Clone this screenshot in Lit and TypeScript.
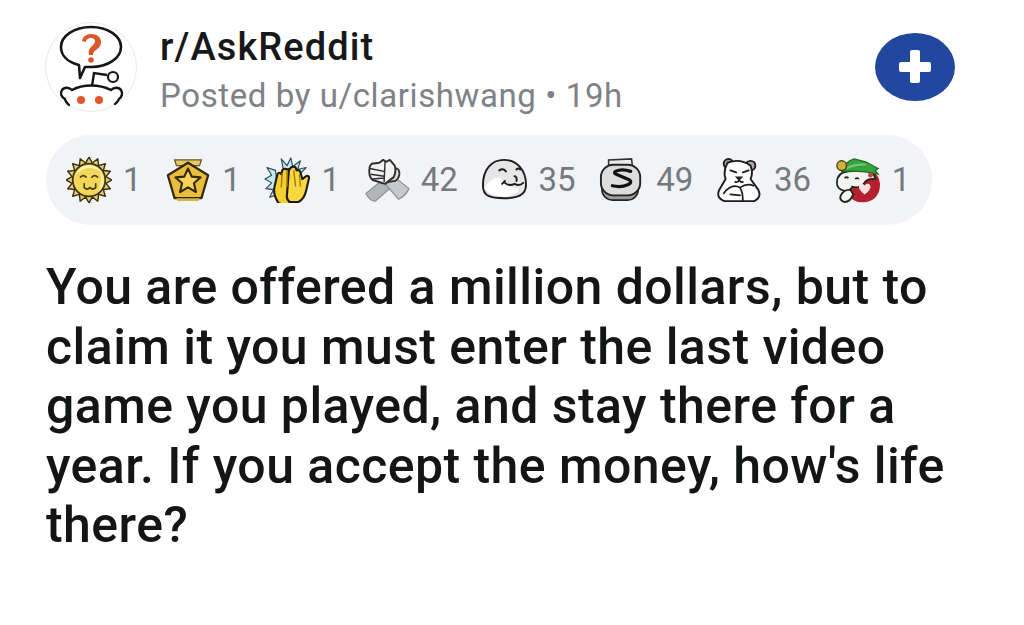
import { LitElement, html, css, svg } from "lit";
import { customElement } from "lit/decorators.js";

const sunRays = Array.from({ length: 16 }, (_, i) => {
  const a = (i * Math.PI * 2) / 16;
  const b = a + Math.PI / 16;
  const c = a - Math.PI / 16;
  const p = (r: number, t: number) => `${(24 + r * Math.cos(t)).toFixed(1)},${(24 + r * Math.sin(t)).toFixed(1)}`;
  return `${p(18, c)} ${p(24, a)} ${p(18, b)}`;
}).join(" ");

const icons: Record<string, unknown> = {
  sun: svg`<polygon points=${sunRays} fill="#e9cf6a" stroke="#3b3212" stroke-width="1.5" stroke-linejoin="round"/>
    <circle cx="24" cy="24" r="17" fill="#f2d75a" stroke="#3b3212" stroke-width="1.8"/>
    <path d="M9 21a15.500 15.500 0 0 1 29-4 18 18 0 0 0-29 4z" fill="#fff6bd"/>
    <path d="M36 14a16 16 0 0 1-3 23q5-10 3-23z" fill="#fff6bd" opacity=".7"/>
    <path d="M15 21q3-3 6 0M27 21q3-3 6 0" fill="none" stroke="#4a3d10" stroke-width="1.6" stroke-linecap="round"/>
    <path d="M19 28v4q3 3 6 0q3 3 6 0v-4" fill="none" stroke="#4a3d10" stroke-width="1.7" stroke-linecap="round"/>`,
  star: svg`<path d="M10 3h28l-2 6H12z" fill="#e7c869" stroke="#6b5520" stroke-width="1.4"/>
    <path d="M24 6l21 13-7 24H10L3 19z" fill="#e8be3c" stroke="#33290c" stroke-width="2.4" stroke-linejoin="round"/>
    <path d="M12 43h24l-1 3H13z" fill="#d6b24a"/>
    <path d="M24 12l3.900 8.500 9.100.8-6.800 6.100 2.100 9.100-8.300-4.800-8.300 4.800 2.100-9.100-6.800-6.100 9.100-.8z" fill="#f5d456" stroke="#33290c" stroke-width="2.200" stroke-linejoin="round"/>`,
  clap: svg`<path d="M12 14L3 11l5 8-7 4 7 4-6 6 8 1-4 8 9-3zM20 12l-2-10 6 7 4-8 2 9 8-6-3 9 9-2-7 7z" fill="#c7e6ef" stroke="#294a57" stroke-width="1.200" stroke-linejoin="round"/>
    <path d="M15 48q-6-10-4-17l3-13q2-3 4 0l1-4q2-3 5-1 2-1 4 1l2 18-1 14q-3 4-9 4z" fill="#f4cf2e" stroke="#1d1a0c" stroke-width="2.200" stroke-linejoin="round"/>
    <path d="M26 14l2-3q3-2 5 0l1 3q3-1 4 2l2 7 4-3q3-1 3 2l-3 13q-2 9-8 12h-9q-4-3-3-8z" fill="#f7d83e" stroke="#1d1a0c" stroke-width="2.200" stroke-linejoin="round"/>
    <path d="M19 17l-1 15M24 14l0 17M31 14l2 17M37 18l1 13" stroke="#a67d0e" stroke-width="1.500" fill="none"/>`,
  arm: svg`<path d="M2 38l16-13 10 7-16 14q-6 0-10-8z" fill="#b3b6b7" stroke="#8a8d8f" stroke-width="1.200" stroke-linejoin="round"/>
    <path d="M47 33L32 21l-9 8 13 15q7-3 11-11z" fill="#c6c8c9" stroke="#8a8d8f" stroke-width="1.200" stroke-linejoin="round"/>
    <path d="M33 25q6-5 3-12l-6-3-3 10-9 7z" fill="#d6d7d8" stroke="#2e2e2e" stroke-width="1.800" stroke-linejoin="round"/>
    <path d="M6 10q-2 10 3 14l13 4 9-7q3-7 1-12l-5-6-4 2-3-2-4 3-8 1z" fill="#f1f1f1" stroke="#2e2e2e" stroke-width="2" stroke-linejoin="round"/>
    <path d="M6 12l15 3M7 18l14 2M9 23l12-1M22 4l-1 22" stroke="#2e2e2e" stroke-width="1.500" fill="none"/>`,
  seal: svg`<path d="M2 30C2 13 11 3 24 3s23 10 23 26c0 11-9 14-23 14C10 43 2 41 2 30z" fill="#e6e6e6" stroke="#1d1d1d" stroke-width="2"/>
    <path d="M4 33q5-12 16-12l6 9 14 3q-4 8-16 8-14 0-20-8z" fill="#fff"/>
    <path d="M19 14q4-3 7 1M37 13q2-2 4 0" fill="none" stroke="#1d1d1d" stroke-width="2" stroke-linecap="round"/>
    <path d="M25 27q5 4 10 1 5 3 9-1M35 20q3 1 2 5M25 25l-3 3" fill="none" stroke="#1d1d1d" stroke-width="2" stroke-linecap="round"/>`,
  s: svg`<path d="M10 11V3l24-1 1 9z" fill="#ececec" stroke="#333" stroke-width="1.600"/>
    <rect x="3" y="20" width="38" height="25" rx="11" fill="#9c9c9c" stroke="#222" stroke-width="1.600"/>
    <rect x="2" y="8" width="41" height="32" rx="13" fill="#dcdcdc" stroke="#222" stroke-width="2"/>
    <path d="M33 15q-9-3-16 0-2 2 1 3l14 6q3 3-2 5-7 3-16 1" fill="none" stroke="#111" stroke-width="3.400" stroke-linecap="round" stroke-linejoin="round"/>`,
  bear: svg`<circle cx="12" cy="7" r="5" fill="#b6a5a3" stroke="#1d1d1d" stroke-width="2"/>
    <circle cx="35" cy="9" r="5" fill="#b6a5a3" stroke="#1d1d1d" stroke-width="2"/>
    <path d="M11 6q13-5 24 3 3 8 0 14l8 11q4 8-4 12H8q-9-3-6-11l7-12q-3-8 2-17z" fill="#fff" stroke="#1d1d1d" stroke-width="2" stroke-linejoin="round"/>
    <path d="M14 14l6 2M27 16l6-2" stroke="#1d1d1d" stroke-width="2" stroke-linecap="round"/>
    <path d="M20 21h6l-3 3z" fill="#1d1d1d" stroke="#1d1d1d" stroke-width="1.200"/>
    <path d="M23 24q-1 3-4 2M23 24q2 3 4 2M7 38q8-11 17-6 7-5 14-2M24 32q3 5 3 13M14 39l10 1" fill="none" stroke="#1d1d1d" stroke-width="1.800" stroke-linecap="round"/>`,
  elf: svg`<path d="M12 26l26-12q8 4 9 14 0 16-14 19-13 2-20-8z" fill="#b4202d"/>
    <path d="M2 27q0-11 12-12l20-1q7 2 8 9-9-1-12 5-4 5-12 3-3 6-9 4-7-2-7-8z" fill="#f3f4ef" stroke="#20261f" stroke-width="1.800"/>
    <path d="M7 15q3-10 13-13l12 3 13 7-3 2 3 4q-16-4-38-3z" fill="#35a53b" stroke="#1f6a26" stroke-width="1.300"/>
    <path d="M12 12q9-5 20-4" fill="none" stroke="#7cc77f" stroke-width="2"/>
    <circle cx="7" cy="9" r="5" fill="#cfb53a" stroke="#4c431a" stroke-width="1.500"/>
    <path d="M31 39c-8-5-7-11-3-11 2 0 3 2 3 2s1-2 3-2c4 0 5 6-3 11z" fill="#ffdede"/>
    <path d="M10 22q2-2 4 0M21 23q2-2 4 0" fill="none" stroke="#20261f" stroke-width="1.700"/>
    <path d="M6 40q3-6 10-6l3 5q-3 8-9 8-6-2-4-7z" fill="#f3f4ef" stroke="#20261f" stroke-width="2"/>
    <circle cx="37" cy="19" r="2.500" fill="#c9413f"/>`,
};

const awards: [string, string][] = [
  ["sun", "1"], ["star", "1"], ["clap", "1"], ["arm", "42"],
  ["seal", "35"], ["s", "49"], ["bear", "36"], ["elf", "1"],
];

@customElement("app-root")
export class AppRoot extends LitElement {
  static styles = css`
    :host {
      display: block;
      width: 1024px;
      height: 625px;
      overflow: hidden;
      background: #fff;
      font-family: Roboto, "Liberation Sans", sans-serif;
      color: #17181a;
    }
    .page { display: flex; flex-direction: column; padding: 22px 46px 0 45px; }
    .head { display: flex; align-items: flex-start; height: 113px; }
    .avatar { width: 92px; height: 90px; flex: none; display: block; }
    .meta { margin-left: 23px; flex: 1; display: flex; flex-direction: column; padding-top: 2px; }
    .sub { font-size: 38px; line-height: 46px; font-weight: 500; color: #17181a; letter-spacing: 1.100px; }
    .posted { font-size: 33px; line-height: 46px; color: #7e8287; margin-top: 3px; white-space: nowrap; letter-spacing: 0.600px; }
    .join { width: 80px; height: 68px; margin: 11px 23px 0 0; flex: none; display: block; }
    .pill {
      height: 90px; width: 886px; box-sizing: border-box;
      margin-left: 1px; padding-left: 20px;
      border-radius: 45px; background: #f1f3f6;
      display: flex; align-items: center; gap: 23.700px;
    }
    .award { display: flex; align-items: center; gap: 11px; }
    .award svg { width: 46px; height: 46px; display: block; flex: none; }
    .count { font-size: 33px; line-height: 40px; color: #75797e; }
    .title {
      margin: 33px 0 0 1px;
      font-size: 50px; line-height: 59.600px; font-weight: 500; letter-spacing: 0.450px;
      color: #141517; white-space: nowrap;
    }
  `;

  render() {
    return html`<div class="page">
      <div class="head">
        <svg class="avatar" viewBox="0 0 92 90">
          <ellipse cx="46" cy="45" rx="45.500" ry="44.500" fill="#fff" stroke="#e9e9e9" stroke-width="1"/>
          <path d="M46 5c17 0 30 9 30 20S63 45 46 45c-2 0-4 0-6 0l-5 11-1-13C22 40 16 33 16 25 16 14 29 5 46 5z" fill="#fff" stroke="#151515" stroke-width="2.600" stroke-linejoin="round"/>
          <path d="M37 19c1-5 5-7 9-7 6 0 10 3 10 8 0 4-2 6-5 8-2 1-3 3-3 5h-4c-1-4 0-6 3-9 2-2 3-3 3-5s-2-3-4-3-5 1-5 4z" fill="#d9582b"/>
          <circle cx="46" cy="38" r="2.800" fill="#d9582b"/>
          <path d="M47 64l2-13 13 2" fill="none" stroke="#151515" stroke-width="2.400"/>
          <circle cx="68" cy="55" r="5" fill="#fff" stroke="#151515" stroke-width="2.200"/>
          <path d="M24 83c-3-3-4-4-4-6a6 6 0 0 1-3-9c2-3 7-3 10 0 11-6 27-6 39 0 3-3 8-3 10 0 2 3 1 7-2 9-1 2-2 4-4 5" fill="#fff" stroke="#151515" stroke-width="2.400" stroke-linecap="round"/>
          <circle cx="36" cy="78" r="4" fill="#e4572e"/><circle cx="54" cy="78" r="4" fill="#e4572e"/>
        </svg>
        <div class="meta">
          <div class="sub">r/AskReddit</div>
          <div class="posted">Posted by u/clarishwang • 19h</div>
        </div>
        <svg class="join" viewBox="0 0 80 68">
          <ellipse cx="40" cy="34" rx="40" ry="34" fill="#21479f"/>
          <rect x="35" y="17" width="10" height="33" rx="2" fill="#fff"/>
          <rect x="24" y="29" width="32" height="10" rx="2" fill="#fff"/>
        </svg>
      </div>
      <div class="pill">
        ${awards.map(([k, n]) => html`<div class="award"><svg viewBox="0 0 48 48">${icons[k]}</svg><span class="count">${n}</span></div>`)}
      </div>
      <div class="title">You are offered a million dollars, but to<br>claim it you must enter the last video<br>game you played, and stay there for a<br>year. If you accept the money, how's life<br>there?</div>
    </div>`;
  }
}
